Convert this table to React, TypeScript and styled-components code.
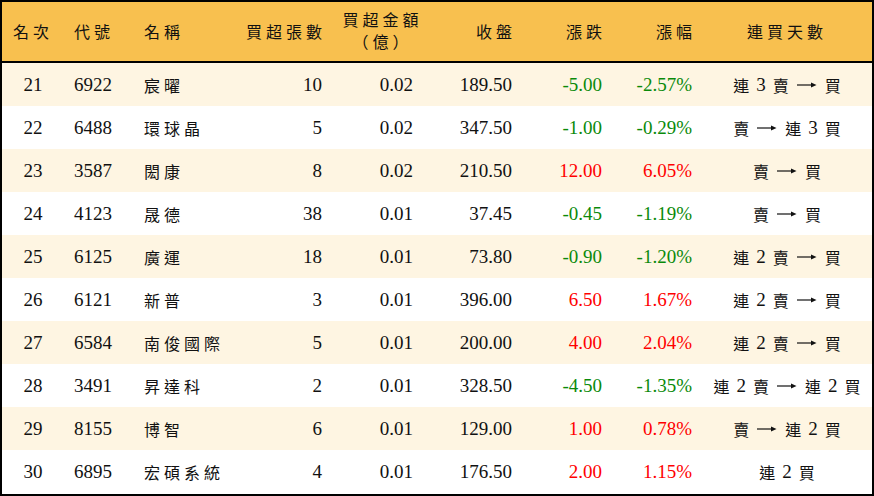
import styled, { createGlobalStyle } from 'styled-components'

const GlobalStyle = createGlobalStyle`
  html, body {
    margin: 0;
    padding: 0;
    background: #ffffff;
  }
`

type Row = {
  rank: number
  code: string
  name: string
  lots: number
  amount: string
  close: string
  change: string
  pct: string
  streak: string
}

const rows: Row[] = [
  { rank: 21, code: '6922', name: '宸曜', lots: 10, amount: '0.02', close: '189.50', change: '-5.00', pct: '-2.57%', streak: '連 3 賣 → 買' },
  { rank: 22, code: '6488', name: '環球晶', lots: 5, amount: '0.02', close: '347.50', change: '-1.00', pct: '-0.29%', streak: '賣 → 連 3 買' },
  { rank: 23, code: '3587', name: '閎康', lots: 8, amount: '0.02', close: '210.50', change: '12.00', pct: '6.05%', streak: '賣 → 買' },
  { rank: 24, code: '4123', name: '晟德', lots: 38, amount: '0.01', close: '37.45', change: '-0.45', pct: '-1.19%', streak: '賣 → 買' },
  { rank: 25, code: '6125', name: '廣運', lots: 18, amount: '0.01', close: '73.80', change: '-0.90', pct: '-1.20%', streak: '連 2 賣 → 買' },
  { rank: 26, code: '6121', name: '新普', lots: 3, amount: '0.01', close: '396.00', change: '6.50', pct: '1.67%', streak: '連 2 賣 → 買' },
  { rank: 27, code: '6584', name: '南俊國際', lots: 5, amount: '0.01', close: '200.00', change: '4.00', pct: '2.04%', streak: '連 2 賣 → 買' },
  { rank: 28, code: '3491', name: '昇達科', lots: 2, amount: '0.01', close: '328.50', change: '-4.50', pct: '-1.35%', streak: '連 2 賣 → 連 2 買' },
  { rank: 29, code: '8155', name: '博智', lots: 6, amount: '0.01', close: '129.00', change: '1.00', pct: '0.78%', streak: '賣 → 連 2 買' },
  { rank: 30, code: '6895', name: '宏碩系統', lots: 4, amount: '0.01', close: '176.50', change: '2.00', pct: '1.15%', streak: '連 2 買' },
]

const COLS = '62px 70px 100px 98px 91px 99px 90px 90px 1fr'

const Board = styled.div`
  width: 874px;
  height: 496px;
  box-sizing: border-box;
  border: 2px solid #000;
  font-family: 'Liberation Serif', 'Noto Sans CJK TC', serif;
  color: #111;
  overflow: hidden;
`

const HeadRow = styled.div`
  display: grid;
  grid-template-columns: ${COLS};
  height: 59px;
  background: #f8c04f;
  border-bottom: 2px solid #000;
  align-items: center;
`

const BodyRow = styled.div<{ $shade: boolean }>`
  display: grid;
  grid-template-columns: ${COLS};
  height: 43px;
  align-items: center;
  background: ${({ $shade }) => ($shade ? '#fef5e2' : '#ffffff')};
`

type Align = 'left' | 'right' | 'center'

const Head = styled.div<{ $align: Align }>`
  font-family: 'Noto Sans CJK TC', serif;
  font-size: 16px;
  letter-spacing: 4px;
  line-height: 19px;
  white-space: nowrap;
  text-align: ${({ $align }) => $align};
  padding: ${({ $align }) => ($align === 'right' ? '0 6px 0 0' : $align === 'left' ? '0 0 0 10px' : '0')};
`

const TwoLineHead = styled(Head)`
  padding: 0;
  margin: -3px -10px 0 0;
  text-align: center;
  line-height: 22px;
`

const Cell = styled.div<{ $align: Align; $tone?: 'up' | 'down' }>`
  font-size: 19px;
  text-align: ${({ $align }) => $align};
  padding: ${({ $align }) => ($align === 'right' ? '0 10px 0 0' : $align === 'left' ? '0 0 0 10px' : '0')};
  color: ${({ $tone }) => ($tone === 'up' ? '#ff0000' : $tone === 'down' ? '#0a8a0a' : '#111')};
  white-space: nowrap;
`

const NameCell = styled(Cell)`
  font-family: 'Noto Sans CJK TC', serif;
  font-size: 16px;
  letter-spacing: 4px;
`

const StreakCell = styled.div`
  display: flex;
  justify-content: center;
  align-items: center;
  gap: 7px;
  white-space: nowrap;
`

const StreakWord = styled.span<{ $num: boolean }>`
  font-family: ${({ $num }) => ($num ? "'Liberation Serif', serif" : "'Noto Sans CJK TC', serif")};
  font-size: ${({ $num }) => ($num ? '19px' : '16px')};
`

const ArrowIcon = styled.svg`
  display: block;
  width: 20px;
  height: 10px;
  margin: 1px 1px 0;
`

const Arrow = () => (
  <ArrowIcon viewBox='0 0 20 10'>
    <line x1='0' y1='5' x2='17' y2='5' stroke='#111' strokeWidth='1.2' />
    <path d='M14 2.6 L19.5 5 L14 7.4 Z' fill='#111' />
  </ArrowIcon>
)

const toneOf = (v: string) => (v.startsWith('-') ? 'down' : 'up')

const Streak = ({ text }: { text: string }) => (
  <StreakCell>
    {text.split(' ').map((w, i) =>
      w === '→' ? <Arrow key={i} /> : <StreakWord key={i} $num={/\d/.test(w)}>{w}</StreakWord>
    )}
  </StreakCell>
)

const App = () => {
  return (
    <>
      <GlobalStyle />
      <Board>
        <HeadRow>
          <Head $align='center'>名次</Head>
          <Head $align='left'>代號</Head>
          <Head $align='left'>名稱</Head>
          <Head $align='right'>買超張數</Head>
          <TwoLineHead $align='center'>買超金額<br />（億）</TwoLineHead>
          <Head $align='right'>收盤</Head>
          <Head $align='right'>漲跌</Head>
          <Head $align='right'>漲幅</Head>
          <Head $align='center'>連買天數</Head>
        </HeadRow>
        {rows.map((r, i) => (
          <BodyRow key={r.rank} $shade={i % 2 === 0}>
            <Cell $align='center'>{r.rank}</Cell>
            <Cell $align='left'>{r.code}</Cell>
            <NameCell $align='left'>{r.name}</NameCell>
            <Cell $align='right'>{r.lots}</Cell>
            <Cell $align='right'>{r.amount}</Cell>
            <Cell $align='right'>{r.close}</Cell>
            <Cell $align='right' $tone={toneOf(r.change)}>{r.change}</Cell>
            <Cell $align='right' $tone={toneOf(r.pct)}>{r.pct}</Cell>
            <Streak text={r.streak} />
          </BodyRow>
        ))}
      </Board>
    </>
  )
}

export default App
